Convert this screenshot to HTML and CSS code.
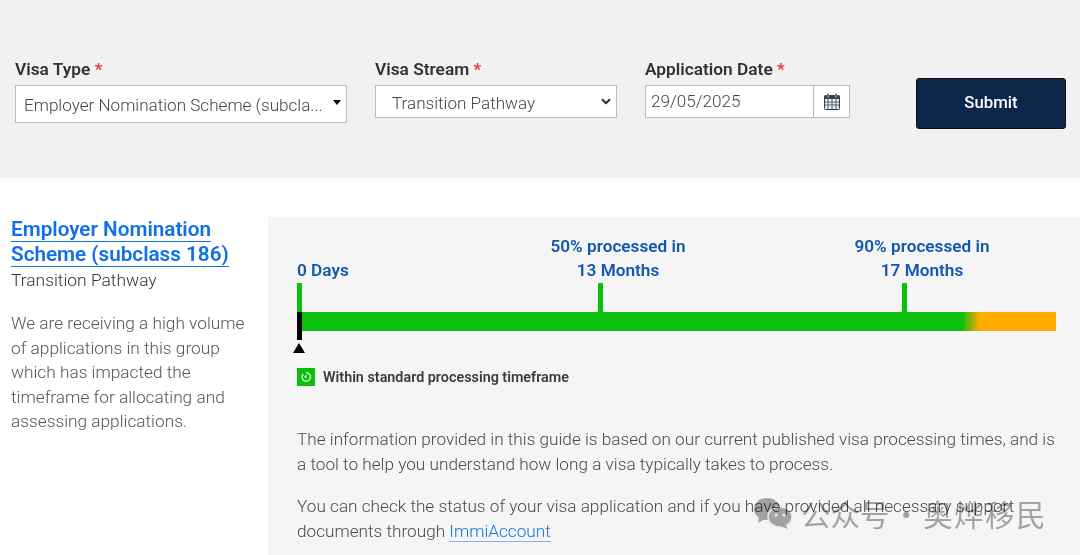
FILE: index.html
```html
<!DOCTYPE html>
<html lang="en">
<head>
<meta charset="utf-8">
<title>Visa processing times</title>
<link rel="stylesheet" href="styles.css">
</head>
<body>
<form class="filters">
  <div class="field field-type">
    <label class="label">Visa Type <span class="req">*</span></label>
    <div class="fake-select"><span class="fake-text">Employer Nomination Scheme (subcla...</span><span class="caret"></span></div>
  </div>
  <div class="field field-stream">
    <label class="label">Visa Stream <span class="req">*</span></label>
    <div class="native-select"><span class="native-text">Transition Pathway</span>
      <svg class="chev" width="10" height="7" viewBox="0 0 10 7"><path d="M1 1.2 5 5.2 9 1.2" fill="none" stroke="#1c2b3f" stroke-width="2"/></svg>
    </div>
  </div>
  <div class="field field-date">
    <label class="label">Application Date <span class="req">*</span></label>
    <div class="date-group">
      <span class="date-text">29/05/2025</span>
      <span class="date-btn">
        <svg width="16" height="17" viewBox="0 0 16 17"><rect x="0.5" y="2.5" width="15" height="14" rx="1" fill="#e8edf2" stroke="#333a44"/><rect x="0.5" y="2.5" width="15" height="3.5" fill="#333a44"/><rect x="3" y="0.5" width="2" height="4" rx="1" fill="#333a44" stroke="#f5f5f5" stroke-width=".5"/><rect x="11" y="0.5" width="2" height="4" rx="1" fill="#333a44" stroke="#f5f5f5" stroke-width=".5"/><path d="M4 6v10M8 6v10M12 6v10M1 9h14M1 12h14" stroke="#59616c" stroke-width="1"/></svg>
      </span>
    </div>
  </div>
  <button class="submit" type="button">Submit</button>
</form>

<main class="result">
  <aside class="side">
    <h2 class="title"><a href="#">Employer Nomination Scheme (subclass 186)</a></h2>
    <p class="stream">Transition Pathway</p>
    <p class="note">We are receiving a high volume of applications in this group which has impacted the timeframe for allocating and assessing applications.</p>
  </aside>
  <section class="panel">
    <div class="timeline">
      <div class="mark mark-0"><span class="mark-label">0 Days</span><span class="tick"></span></div>
      <div class="mark mark-50"><span class="mark-label">50% processed in<br>13 Months</span><span class="tick"></span></div>
      <div class="mark mark-90"><span class="mark-label">90% processed in<br>17 Months</span><span class="tick"></span></div>
      <div class="bar"></div>
      <div class="now"></div>
      <div class="arrow"></div>
    </div>
    <div class="status">
      <span class="status-icon">
        <svg width="12" height="12" viewBox="0 0 12 12"><path d="M3.4 2.9A4.2 4.2 0 1 0 6 1.8" fill="none" stroke="#c8f0c8" stroke-width="1.4"/><path d="M6 3.8v2.6L4.4 5.2" fill="none" stroke="#c8f0c8" stroke-width="1.1"/></svg>
      </span>
      <span class="status-text">Within standard processing timeframe</span>
    </div>
    <p class="copy copy-first">The information provided in this guide is based on our current published visa processing times, and is a tool to help you understand how long a visa typically takes to process.</p>
    <p class="copy copy-second">You can check the status of your visa application and if you have provided all necessary support documents through <a href="#">ImmiAccount</a></p>
  </section>
</main>

<div class="watermark">
  <svg width="40" height="32" viewBox="0 0 40 32"><ellipse cx="14" cy="12" rx="13" ry="11" fill="#a9a9a9"/><path d="M6 19 5 26 12 22Z" fill="#a9a9a9"/><ellipse cx="27" cy="20" rx="12" ry="10" fill="#a9a9a9" stroke="#f5f5f5" stroke-width="1.5"/><path d="M32 27 35 32 27 29Z" fill="#a9a9a9"/><circle cx="23" cy="18" r="1.6" fill="#f5f5f5"/><circle cx="31" cy="18" r="1.6" fill="#f5f5f5"/></svg>
  <span class="wm-text">公众号 · <span class="wm-name">奥烨移民</span></span>
</div>
</body>
</html>
```
FILE: styles.css
```css
* { box-sizing: border-box; }
html, body { margin: 0; padding: 0; }
body {
  width: 1080px;
  height: 555px;
  overflow: hidden;
  position: relative;
  background: #fff;
  font-family: Roboto, "Liberation Sans", sans-serif;
  color: #3a3a3a;
}
.filters {
  display: flex;
  align-items: flex-start;
  height: 178px;
  padding: 59px 0 0 15px;
  background: #f1f1f1;
}
.field { display: flex; flex-direction: column; }
.field-type { width: 332px; margin-right: 28px; }
.field-stream { width: 242px; margin-right: 28px; }
.field-date { width: 205px; margin-right: 66px; }
.label {
  font-size: 17.3px;
  font-weight: 600;
  line-height: 20px;
  height: 26px;
  color: #333;
}
.req { color: #ff2a2a; }
.fake-select, .native-select, .date-group {
  display: flex;
  align-items: center;
  background: #fff;
  border: 1px solid #bbb;
  font-size: 17.1px;
  font-weight: 300;
  color: #444;
}
.fake-select { height: 38px; padding: 2px 5px 0 8px; justify-content: space-between; }
.fake-text { white-space: nowrap; }
.caret {
  width: 0; height: 0;
  margin-bottom: 5px;
  border-left: 4.5px solid transparent;
  border-right: 4.5px solid transparent;
  border-top: 5px solid #000;
}
.native-select { height: 33px; padding: 0 5px 0 16px; justify-content: space-between; }
.native-text { padding-top: 3px; }
.date-group { height: 33px; width: 205px; }
.date-text { flex: 1; padding: 0 0 1px 5px; }
.date-btn {
  width: 36px; height: 100%;
  display: flex; align-items: center; justify-content: center;
  border-left: 1px solid #bbb;
}
.submit {
  margin-top: 19px;
  width: 150px;
  height: 51px;
  padding: 0 0 4px;
  background: #0c2749;
  color: #fff;
  border: 1px solid #111;
  border-radius: 3px;
  font: 500 16.8px Roboto, sans-serif;
}
.result {
  display: flex;
  margin-top: 39px;
  height: 338px;
}
.side { width: 257px; margin-left: 11px; padding-right: 10px; }
.title { margin: 0; font-size: 20.7px; font-weight: 600; line-height: 25px; }
.title a { color: #0f70e8; text-decoration: none; border-bottom: 1px solid #0f70e8; }
.stream { margin: 0 0 0; font-size: 17.4px; line-height: 26px; font-weight: 300; color: #333; }
.note { margin: 18px 0 0; font-size: 17.25px; line-height: 24.6px; font-weight: 300; color: #555; }
.panel { flex: 1; background: #f5f5f5; padding: 0 24px 0 29px; }
.timeline { position: relative; height: 137px; }
.mark { position: absolute; top: 17px; width: 200px; height: 78px; text-align: center; }
.mark-label {
  display: block;
  color: #1259ad;
  font-size: 17.2px;
  font-weight: 600;
  line-height: 24px;
}
.tick { position: absolute; bottom: 0; left: 80px; width: 5px; height: 29px; background: #0cbf0c; }
.mark-0 { left: 0; text-align: left; }
.mark-0 .mark-label { margin-top: 24px; }
.mark-0 .tick { left: 0; }
.mark-50 { left: 221px; }
.mark-90 { left: 525px; }
.bar {
  position: absolute;
  left: 0; top: 95px;
  width: 759px; height: 19px;
  background: linear-gradient(90deg, #0cbf0c 0, #0cbf0c 87.6%, #ffab00 89.9%, #ffab00 100%);
}
.now { position: absolute; left: 0; top: 95px; width: 5px; height: 28px; background: #000; }
.arrow {
  position: absolute; left: -4px; top: 126px;
  width: 0; height: 0;
  border-left: 6.5px solid transparent;
  border-right: 6.5px solid transparent;
  border-bottom: 10px solid #000;
}
.status { display: flex; align-items: center; gap: 8px; margin-top: 14px; height: 18px; }
.status-icon {
  width: 18px; height: 18px;
  background: #0cbf0c;
  display: flex; align-items: center; justify-content: center;
}
.status-text { font-size: 14.35px; font-weight: 600; color: #3b3b3b; }
.copy { margin: 0; font-size: 17.2px; line-height: 24.6px; font-weight: 300; color: #4a4a4a; }
.copy-first { margin-top: 41px; }
.copy-second { margin-top: 18px; }
.copy a { color: #1273e6; text-decoration: none; border-bottom: 1px solid #7db3f0; }
.watermark {
  position: absolute;
  left: 753px; top: 496px;
  display: flex;
  align-items: center;
  gap: 8px;
  color: #a9a9a9;
  mix-blend-mode: multiply;
}
.wm-text { font-family: "Noto Sans CJK SC", sans-serif; font-size: 29.5px; word-spacing: -4.5px; line-height: 34px; white-space: nowrap; }
.wm-name { letter-spacing: 1.4px; }
```
